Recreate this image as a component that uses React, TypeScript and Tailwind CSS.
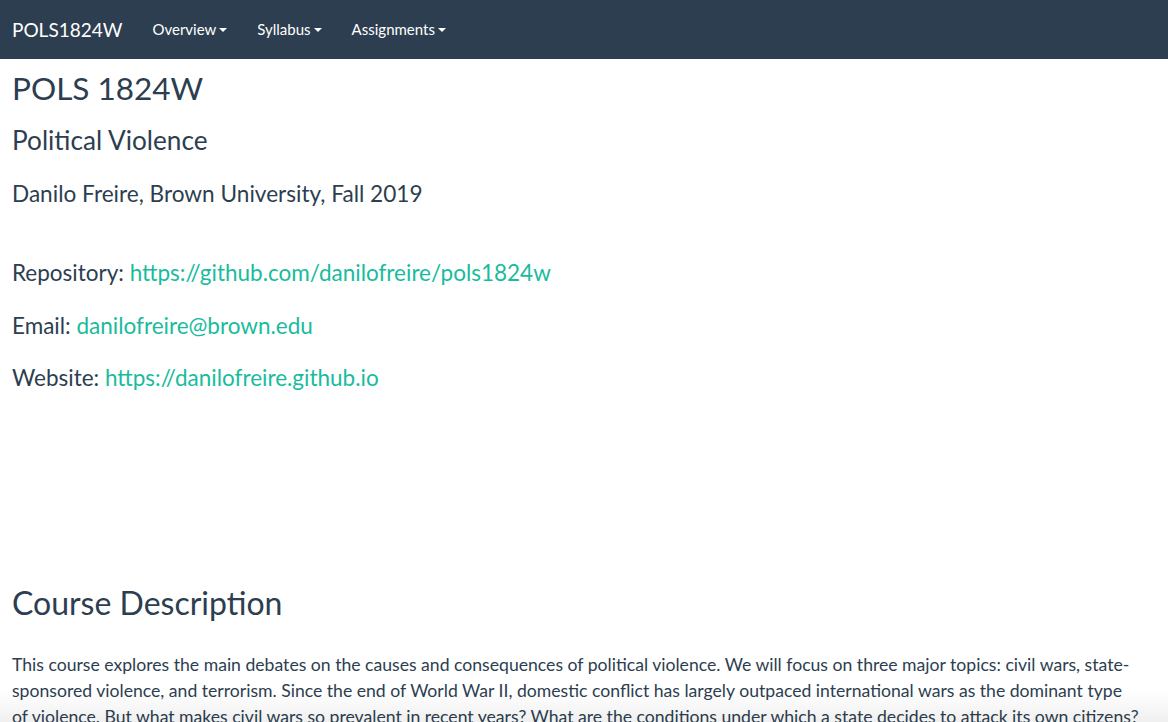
import React from "react";

const Caret = () => (
  <span className="ml-[3px] inline-block h-0 w-0 border-x-[4px] border-t-[4px] border-x-transparent border-t-white align-middle" />
);

export default function App() {
  return (
    <div className="relative h-[722px] overflow-hidden bg-white text-[#2c3e50]" style={{ fontFamily: "Lato, 'Noto Sans', sans-serif" }}>
      <nav className="flex h-[59px] items-center bg-[#2c3e50] text-white">
        <span className="pl-[12px] pr-[15px] text-[19px] leading-none">POLS1824W</span>
        <div className="flex items-center">
          <span className="flex items-center px-[15px] text-[15px]">Overview<Caret /></span>
          <span className="flex items-center px-[15px] text-[15px]">Syllabus<Caret /></span>
          <span className="flex items-center px-[15px] text-[15px]">Assignments<Caret /></span>
        </div>
      </nav>
      <main className="pl-[12px] pr-[28px]">
        <h1 className="mt-[9px] text-[31.5px] leading-[40px]">POLS 1824W</h1>
        <h2 className="mt-[16px] text-[26.2px] leading-[32px]">Political Violence</h2>
        <h3 className="mt-[23px] text-[22.6px] leading-[30px]">Danilo Freire, Brown University, Fall 2019</h3>
        <div className="mt-[50px] flex flex-col gap-[25px] text-[22.5px] leading-[27.5px]">
          <p>Repository: <a className="text-[#18bc9c]">https://github.com/danilofreire/pols1824w</a></p>
          <p>Email: <a className="text-[#18bc9c]">danilofreire@brown.edu</a></p>
          <p>Website: <a className="text-[#18bc9c]">https://danilofreire.github.io</a></p>
        </div>
        <h2 className="mt-[191px] text-[32px] leading-[40px]">Course Description</h2>
        <p className="mt-[29px] text-[17.63px] leading-[26px]">
          This course explores the main debates on the causes and consequences of political violence. We will focus on three major topics: civil wars, state-sponsored violence, and terrorism. Since the end of World War II, domestic conflict has largely outpaced international wars as the dominant type of violence. But what makes civil wars so prevalent in recent years? What are the conditions under which a state decides to attack its own citizens?
        </p>
      </main>
      <div className="pointer-events-none absolute inset-x-0 bottom-0 h-[32px] bg-gradient-to-b from-black/0 to-black/[0.06]" />
    </div>
  );
}
